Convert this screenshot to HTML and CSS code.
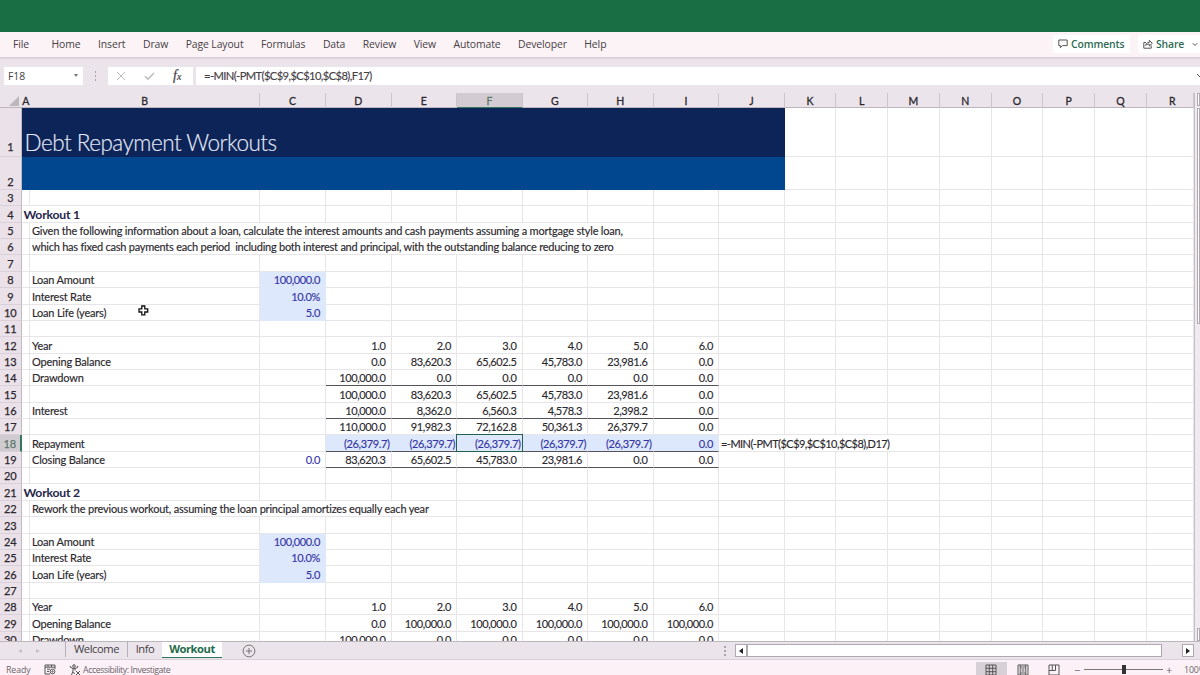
FILE: index.html
```html
<!DOCTYPE html>
<html lang="en">
<head>
    <meta charset="UTF-8">
    <meta name="viewport" content="width=device-width, initial-scale=1.0">
    <title>Debt Repayment Workouts</title>
    <link rel="stylesheet" href="styles.css">
</head>
<body>
    <div class="title-bar"></div>
    <nav class="ribbon">
        <div class="menu">
            <span class="file">File</span>
            <span>Home</span>
            <span>Insert</span>
            <span>Draw</span>
            <span>Page Layout</span>
            <span>Formulas</span>
            <span>Data</span>
            <span>Review</span>
            <span>View</span>
            <span>Automate</span>
            <span>Developer</span>
            <span>Help</span>
        </div>
        <button class="comments">
            <svg width="10" height="10" viewBox="0 0 10 10"><path d="M.8 1h8.4v5.6H4.4L2.4 8.700V6.600H.8z"/></svg>
            Comments
        </button>
        <button class="share">
            <svg width="10" height="10" viewBox="0 0 10 10"><path d="M3 3.500H.8v5.700h7.400V6.500M2.600 6.500c.3-2 1.600-3 3.700-3V1.300l3 3-3 2.700V5.200c-1.700 0-2.800.3-3.700 1.300z"/></svg>
            Share
            <svg class="chevron" width="6" height="5" viewBox="0 0 6 5"><path d="M.8 1.200L3 3.500l2.200-2.300"/></svg>
        </button>
    </nav>
    <div class="formula-bar">
        <div class="name-box">F18 <i class="arrow-down"></i></div>
        <div class="dots"><i></i><i></i><i></i></div>
        <div class="fx-tools">
            <svg width="10" height="10" viewBox="0 0 10 10"><path d="M1 1l8 8M9 1L1 9"/></svg>
            <svg width="11" height="10" viewBox="0 0 11 10"><path class="thick" d="M1 5.300l3 3L10 2"/></svg>
            <span class="fx">f<small>x</small></span>
        </div>
        <div class="formula">=-MIN(-PMT($C$9,$C$10,$C$8),F17)
            <svg class="expand" width="8" height="6" viewBox="0 0 8 6"><path d="M1 1l3 3 3-3"/></svg>
        </div>
    </div>
    <main class="workspace">
        <div class="sheet" id="sheet"></div>
        <div class="v-scroll">
            <div class="v-button"></div>
            <div class="v-thumb"></div>
            <div class="v-button bottom"></div>
        </div>
        <svg class="cursor" width="11" height="11" viewBox="0 0 11 11"><path d="M3.800 1h3v2.800H9.700v3.200H6.800v2.800h-3V7H1V3.800h2.800z"/></svg>
    </main>
    <div class="tab-bar">
        <div class="tab-nav"><i class="left"></i><i class="right"></i></div>
        <div class="tab">Welcome</div>
        <div class="tab info">Info</div>
        <div class="tab active">Workout</div>
        <svg class="add" width="14" height="14" viewBox="0 0 14 14"><circle cx="7" cy="7" r="5.900"/><path d="M7 4v6M4 7h6"/></svg>
        <div class="dots"><i></i><i></i><i></i></div>
        <div class="h-scroll">
            <div class="h-button"><i class="left"></i></div>
            <div class="h-thumb"></div>
            <div class="h-button end"><i class="right"></i></div>
        </div>
    </div>
    <footer class="status">
        <span class="ready">Ready</span>
        <svg class="macro" width="12" height="11" viewBox="0 0 12 11"><path d="M11 5V1H1v9h5M1 3.200h10M3 5.200h3M3 7.500h2M4 1v2M7.500 1v2"/><circle cx="8.500" cy="7.500" r="2.400"/><circle cx="8.500" cy="7.500" r=".7"/></svg>
        <svg class="access" width="12" height="12" viewBox="0 0 12 12"><circle cx="5" cy="2" r="1.300"/><path d="M1 3l3 1.500v2.500L2.500 11M9 3L6 4.500V6.500M4 4.500h2M4.500 8L5.500 10M7 7l4 4M11 7l-4 4M1 3l.5-1M9 3l-.5-1"/></svg>
        <span class="access-text">Accessibility: Investigate</span>
        <div class="view active"><svg width="12" height="12" viewBox="0 0 12 12"><path d="M1 1h10v10H1zM1 4.300h10M1 7.700h10M4.300 1v10M7.700 1v10"/></svg></div>
        <div class="view"><svg width="12" height="12" viewBox="0 0 12 12"><path d="M1 1h10v10H1zM3.200 1v10M8.800 1v10M3.200 3h5.600M4.500 5h3M4.500 7h3M3.200 9h5.600"/></svg></div>
        <div class="view"><svg width="12" height="12" viewBox="0 0 12 12"><path d="M1 1h10v10H1zM1 6.500h6.500V1M4.300 1v5.500"/></svg></div>
        <div class="zoom">
            <span class="sign">−</span>
            <div class="slider"><i></i></div>
            <span class="sign">+</span>
            <span class="percent">100%</span>
        </div>
    </footer>
    <script>
        const letters = 'ABCDEFGHIJKLMNOPQR'.split('');

        // each cell: [column, text, class, span]
        const rows = {
            1: [['A', 'Debt Repayment Workouts', 'banner title', 10]],
            2: [['A', '', 'banner light', 10]],
            4: [['A', 'Workout 1', 'heading', 2]],
            5: [['B', 'Given the following information about a loan, calculate the interest amounts and cash payments assuming a mortgage style loan,', 'long', 7]],
            6: [['B', 'which has fixed cash payments each period  including both interest and principal, with the outstanding balance reducing to zero', 'long second', 7]],
            8: [['B', 'Loan Amount'], ['C', '100,000.0', 'num input']],
            9: [['B', 'Interest Rate'], ['C', '10.0%', 'num input']],
            10: [['B', 'Loan Life (years)'], ['C', '5.0', 'num input']],
            12: series('Year', ['1.0', '2.0', '3.0', '4.0', '5.0', '6.0']),
            13: series('Opening Balance', ['0.0', '83,620.3', '65,602.5', '45,783.0', '23,981.6', '0.0']),
            14: series('Drawdown', ['100,000.0', '0.0', '0.0', '0.0', '0.0', '0.0'], 'ruled'),
            15: series('', ['100,000.0', '83,620.3', '65,602.5', '45,783.0', '23,981.6', '0.0']),
            16: series('Interest', ['10,000.0', '8,362.0', '6,560.3', '4,578.3', '2,398.2', '0.0'], 'ruled'),
            17: series('', ['110,000.0', '91,982.3', '72,162.8', '50,361.3', '26,379.7', '0.0']),
            18: series('Repayment', ['(26,379.7)', '(26,379.7)', '(26,379.7)', '(26,379.7)', '(26,379.7)', '0.0'], 'input ruled')
                .concat([['J', '=-MIN(-PMT($C$9,$C$10,$C$8),D17)', 'note', 4]]),
            19: [['C', '0.0', 'num blue']].concat(series('Closing Balance', ['83,620.3', '65,602.5', '45,783.0', '23,981.6', '0.0', '0.0'], 'ruled')),
            21: [['A', 'Workout 2', 'heading', 2]],
            22: [['B', 'Rework the previous workout, assuming the loan principal amortizes equally each year', 'long', 4]],
            24: [['B', 'Loan Amount'], ['C', '100,000.0', 'num input']],
            25: [['B', 'Interest Rate'], ['C', '10.0%', 'num input']],
            26: [['B', 'Loan Life (years)'], ['C', '5.0', 'num input']],
            28: series('Year', ['1.0', '2.0', '3.0', '4.0', '5.0', '6.0']),
            29: series('Opening Balance', ['0.0', '100,000.0', '100,000.0', '100,000.0', '100,000.0', '100,000.0']),
            30: series('Drawdown', ['100,000.0', '0.0', '0.0', '0.0', '0.0', '0.0'])
        };

        function series(label, values, cls = '') {
            return [['B', label]].concat(values.map((value, i) => {
                const paren = value.startsWith('(') ? ' paren' : '';
                return ['DEFGHI'[i], value, `num ${cls}${paren}`];
            }));
        }

        function drawSheet() {
            let html = '<div class="row head"><div class="corner"></div>';
            letters.forEach(letter => {
                html += `<div class="col-head${letter === 'F' ? ' current' : ''}">${letter}</div>`;
            });
            html += '</div>';

            for (let r = 1; r <= 30; r++) {
                html += `<div class="row row-${r}"><div class="row-head${r === 18 ? ' current' : ''}">${r}</div>`;
                for (let c = 0; c < letters.length; c++) {
                    const cell = (rows[r] || []).find(item => item[0] === letters[c]);
                    if (!cell) {
                        html += '<div class="cell"></div>';
                        continue;
                    }
                    const span = cell[3] || 1;
                    const selected = r === 18 && letters[c] === 'F' ? ' selected' : '';
                    html += `<div class="cell ${cell[2] || ''} span-${span}${selected}"><span>${cell[1]}</span></div>`;
                    c += span - 1;
                }
                html += '</div>';
            }
            document.getElementById('sheet').innerHTML = html;
        }

        drawSheet();
    </script>
</body>
</html>
```
FILE: styles.css
```css
* {
    box-sizing: border-box;
}

body {
    display: flex;
    flex-direction: column;
    width: 1200px;
    height: 675px;
    margin: 0;
    overflow: hidden;
    background-color: #ebe4eb;
    font-family: "Open Sans", sans-serif;
    font-size: 10.4px;
    color: #454045;
}

svg {
    fill: none;
    stroke: #555;
    stroke-width: 1;
    flex: none;
}

.title-bar {
    flex: none;
    height: 32px;
    background-color: #1a6e43;
}

/* ribbon */
.ribbon {
    display: flex;
    flex: none;
    align-items: center;
    height: 26px;
    padding: 0 0 1px 13px;
    background-color: #fcf3f6;
    border-bottom: 1px solid #d9d0d7;
}

.menu {
    display: flex;
    flex: 1;
    gap: 17.5px;
    letter-spacing: -0.1px;
}

.menu .file {
    margin-right: 5px;
}

.ribbon button {
    display: flex;
    align-items: center;
    flex: none;
    height: 18px;
    padding: 0 0 0 6px;
    gap: 3px;
    border: none;
    border-radius: 2px;
    background-color: #fff;
    color: #2f6b55;
    font: 600 10.4px "Open Sans", sans-serif;
    letter-spacing: -0.15px;
    white-space: nowrap;
}

.ribbon .comments {
    width: 77px;
    margin-right: 8px;
    padding-left: 5px;
}

.ribbon .share {
    width: 62px;
    padding-left: 5px;
}

.ribbon .chevron {
    margin-left: 5px;
}

/* formula bar */
.formula-bar {
    display: flex;
    flex: none;
    height: 35px;
    padding: 8px 0 8px 4px;
    border-top: 1px solid #ddd5dc;
}

.name-box {
    display: flex;
    align-items: center;
    justify-content: space-between;
    width: 79px;
    padding: 0 5px 1px 4px;
    background-color: #fff;
}

.arrow-down {
    border: 2.5px solid transparent;
    border-top: 3px solid #777;
    border-bottom: none;
}

.dots {
    display: flex;
    flex-direction: column;
    justify-content: center;
    align-items: center;
    gap: 2px;
    width: 25px;
}

.dots i {
    width: 1.5px;
    height: 2px;
    background-color: #aaa3aa;
}

.fx-tools {
    display: flex;
    align-items: center;
    width: 85px;
    margin-right: 3px;
    padding-left: 8px;
    gap: 18px;
    background-color: #fff;
}

.fx-tools svg {
    stroke: #bbb;
}

.fx-tools .thick {
    stroke-width: 1.5;
}

.fx {
    font: italic 14px "Liberation Serif", serif;
    -webkit-text-stroke: 0.2px;
}

.fx small {
    font-size: 10px;
}

.formula {
    display: flex;
    align-items: center;
    justify-content: space-between;
    flex: 1;
    padding: 0 0 1px 8px;
    background-color: #fff;
    font-family: Lato, sans-serif;
    font-size: 11.2px;
    letter-spacing: -0.6px;
    -webkit-text-stroke: 0.15px;
}

.expand {
    margin-right: -4px;
}

/* sheet */
.workspace {
    position: relative;
    display: flex;
    flex: none;
    height: 548px;
    overflow: hidden;
    font-family: Lato, sans-serif;
    font-size: 11px;
    letter-spacing: -0.2px;
    color: #2b282e;
    -webkit-text-stroke: 0.15px;
}

.sheet {
    width: 1194px;
    flex: none;
}

.row {
    display: grid;
    grid-template-columns: 21.500px 8.500px 230px 66px repeat(7, 65.500px) repeat(7, 51.750px) 47px;
    height: 16.370px;
}

.head {
    height: 15px;
    border-bottom: 1px solid #bdb5bd;
    background-color: #ebe4eb;
}

.corner {
    width: 10px;
    height: 10px;
    margin: 3px 0 0 9px;
    background-color: #bdb6bd;
    clip-path: polygon(100% 0, 100% 100%, 0 100%);
}

.col-head {
    padding-top: 2px;
    border-right: 1px solid #cdc5cd;
    text-align: center;
    font-size: 10.500px;
    line-height: 12px;
    -webkit-text-stroke: 0.3px;
}

.col-head:nth-child(2) {
    border-right: none;
}

.col-head:last-child {
    padding-left: 5px;
}

.col-head.current {
    background-color: #d2ccd2;
    border-bottom: 1px solid #35755b;
    color: #5c7a6c;
}

.row-head {
    display: flex;
    align-items: flex-end;
    justify-content: center;
    border-right: 1px solid #c2bac2;
    border-bottom: 1px solid #d9d0d9;
    background-color: #ebe1e9;
    font-size: 11px;
    line-height: 14px;
    -webkit-text-stroke: 0.25px;
}

.row-head.current {
    background-color: #d0cbd0;
    border-right: 2px solid #35755b;
    color: #5c7a6c;
}

.cell {
    position: relative;
    display: flex;
    align-items: flex-end;
    min-width: 0;
    padding-left: 2px;
    border-right: 1px solid #e7e5e8;
    border-bottom: 1px solid #e7e5e8;
    background-color: #fff;
    line-height: 14px;
    white-space: pre;
}

.span-2 { grid-column: span 2; }
.span-4 { grid-column: span 4; }
.span-7 { grid-column: span 7; }
.span-10 { grid-column: span 10; }

.row-1 {
    height: 49px;
}

.row-1 .row-head {
    padding-bottom: 2px;
}

.row-2 {
    height: 33px;
}

.banner {
    padding-left: 3px;
    border: none;
}

.title {
    align-items: center;
    padding-top: 20px;
    background-color: #0d2459;
    color: #e3e9f7;
    font-size: 22.500px;
    font-weight: 300;
    letter-spacing: -0.5px;
}

.light {
    background-color: #00478f;
}

.heading {
    font-size: 12.200px;
    font-weight: 700;
    color: #25264a;
    -webkit-text-stroke: 0;
}

.second {
    letter-spacing: -0.24px;
}

.note {
    letter-spacing: -0.54px;
}

.num {
    justify-content: flex-end;
    padding-right: 5px;
    letter-spacing: -0.38px;
}

.paren {
    padding-right: 1px;
}

.input {
    background-color: #dde8fc;
    border-color: #dde8fc;
    color: #3434a5;
}

.blue {
    color: #3434a5;
}

.ruled {
    border-bottom-color: #55525a;
}

.selected::after {
    content: "";
    position: absolute;
    inset: -1px;
    border: 1px solid #24604a;
}

.cursor {
    position: absolute;
    left: 138px;
    top: 212px;
    fill: #fff;
    stroke: #111;
    stroke-width: 1.300;
}

/* vertical scrollbar, cut by the window edge */
.v-scroll {
    display: flex;
    flex-direction: column;
    width: 7px;
    padding-left: 2px;
    border-left: 1px solid #c6bec6;
    background-color: #f0eaf0;
}

.v-button {
    height: 13px;
    border: 1px solid #b0aab0;
    background-color: #fff;
}

.v-button.bottom {
    margin-top: auto;
}

.v-thumb {
    height: 216px;
    margin-top: 2px;
    border: 1px solid #b0aab0;
    background-color: #fff;
}

/* sheet tabs */
.tab-bar {
    display: flex;
    flex: none;
    height: 19px;
    border-top: 1px solid #bdb6bd;
    border-bottom: 1px solid #d9d1d9;
    font-size: 11.200px;
    letter-spacing: -0.45px;
    line-height: 14px;
}

.tab-nav {
    display: flex;
    align-items: center;
    gap: 14px;
    width: 65px;
    padding-left: 18px;
}

.left,
.right {
    border: 3px solid transparent;
}

.left {
    border-right: 4px solid #222;
    border-left: none;
}

.right {
    border-left: 4px solid #222;
    border-right: none;
}

.tab-nav i {
    border-top-width: 2px;
    border-bottom-width: 2px;
    border-left-color: #c6bfc6;
    border-right-color: #c6bfc6;
}

.tab {
    height: 15px;
    width: 62px;
    border-left: 1px solid #b8b0b8;
    text-align: center;
}

.tab.info {
    width: 35px;
}

.tab.active {
    width: 60px;
    height: 16px;
    border-left: none;
    border-bottom: 1px solid #2f7558;
    background-color: #fff;
    color: #1f6b4b;
    font-weight: 700;
}

.add {
    margin: 2px 0 0 20px;
    stroke: #777;
}

.tab-bar > .dots {
    margin-left: auto;
    width: 20px;
}

.h-scroll {
    display: flex;
    width: 465px;
    height: 13px;
    margin-top: 2px;
}

.h-button {
    display: flex;
    align-items: center;
    justify-content: center;
    width: 12px;
    border: 1px solid #b0aab0;
    background-color: #fff;
}

.h-thumb {
    width: 415px;
    border: 1px solid #b0aab0;
    background-color: #fff;
}

.h-button.end {
    margin-left: 20px;
}

/* status bar */
.status {
    display: flex;
    flex: 1;
    align-items: center;
    padding: 2px 0 0 6px;
    background-color: #fcf1f7;
    font-size: 8.800px;
    color: #6b656b;
    letter-spacing: -0.1px;
    white-space: nowrap;
}

.ready {
    width: 38px;
}

.access {
    margin: 0 2px 0 13px;
}

.view {
    display: flex;
    align-items: center;
    justify-content: center;
    width: 31.500px;
    height: 100%;
}

.access-text {
    margin-right: auto;
    letter-spacing: -0.42px;
}

.view.active {
    background-color: #d8d0d7;
}

.zoom {
    display: flex;
    align-items: center;
    width: 130px;
    padding-left: 4px;
}

.sign {
    flex: none;
    width: 10px;
    font-size: 11px;
}

.slider {
    flex: none;
    display: flex;
    align-items: center;
    justify-content: center;
    width: 79px;
    height: 10px;
    margin-right: 3px;
    background: linear-gradient(#777, #777) center / 100% 1px no-repeat;
}

.slider i {
    width: 4px;
    height: 9px;
    background-color: #333;
}

.percent {
    margin-left: 8px;
}
```
